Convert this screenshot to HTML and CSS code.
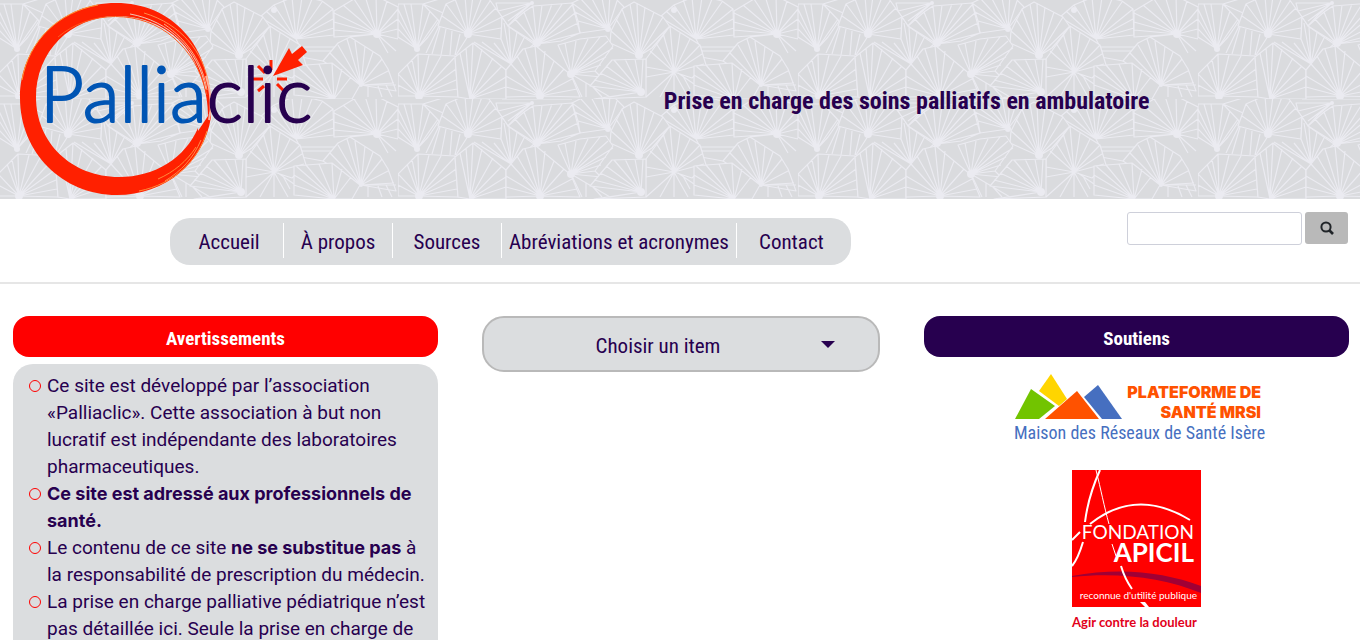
FILE: index.html
```html
<!DOCTYPE html>
<html lang="fr">
<head>
  <meta charset="UTF-8">
  <meta name="viewport" content="width=device-width, initial-scale=1">
  <title>Palliaclic</title>
  <link rel="stylesheet" href="styles.css">
</head>
<body>
  <header class="banner">
    <svg class="banner-pattern" aria-hidden="true">
      <defs>
        <pattern id="fans" x="-2" y="-1" width="400" height="100" patternUnits="userSpaceOnUse">
          <rect width="400" height="100" fill="#dadbde"/>
          <g fill="#dadbde" stroke="#ebebf1" stroke-width="1.2" stroke-linejoin="round">
            <path d="M134 4L98 4 100 12 104 18 110 27 120 16zM134 4L100 12M134 4L104 18M134 4L110 22M104 0H174"/>
            <path d="M210 30L182 34 180 22 174 4 190 -4 210 -8 226 8zM210 30L180 22M210 30L177 13M210 30L174 4M210 30L183 0M210 30L192 -4M210 30L203 -6M210 30L212 -6M210 30L219 2"/>
            <path d="M298 40L262 18 276 6 300 -4 324 2 335 10 336 36zM298 40L268 12M298 40L276 6M298 40L285 0M298 40L294 -2M298 40L304 -2M298 40L314 0M298 40L324 3M298 40L335 10M298 40L335 20M298 40L336 29M298 40L304 52 306 66M300 48H340M303 58L325 62M304 52L336 52"/>
            <path d="M379 35L336 38 336 12 356 0 376 -4 400 8 400 40zM379 35L336 31M379 35L336 23M379 35L336 14M379 35L345 6M379 35L356 0M379 35L367 -3M379 35L378 -3M379 35L389 2M379 35L400 10M379 35L400 20M379 35L400 30M379 35L398 52M379 35L390 54M379 35L352 38"/>
            <path d="M19 50L0 38 0 5 25 5 41 22 30 38zM19 50L0 30M19 50L0 20M19 50L0 10M19 50L6 5M19 50L13 5M19 50L25 5M19 50L32 12M19 50L40 20M25 5L48 -2M25 5L45 14"/>
            <path d="M70 35L40 27 48 5 68 -4 91 0 104 18 103 40zM70 35L44 17M70 35L48 5M70 35L57 0M70 35L67 -3M70 35L75 -3M70 35L84 -2M70 35L92 2M70 35L98 9M70 35L104 18M70 35L103 29M41 27L28 54M42 28L34 55M48 30L43 56M54 32L52 56M62 35L57 56M70 37L58 56"/>
            <path d="M113 65L103 40 104 18 110 27 136 45zM113 65L106 24M113 65L111 28M113 65L119 33M113 65L126 39M113 65L76 43M113 65L84 43M113 65L96 44"/>
            <path d="M139 45L110 27 126 13 135 7 174 4 182 34 163 42zM139 45L117 20M139 45L126 13M139 45L135 7M139 45L144 6M139 45L154 5M139 45L164 5M139 45L174 6M139 45L177 14M139 45L180 24M139 45L182 34"/>
            <path d="M241 57L212 44 213 32 224 10 236 3 265 18 272 28 254 49zM241 57L213 32M241 57L218 20M241 57L224 10M241 57L232 5M241 57L239 4M241 57L247 8M241 57L256 13M241 57L265 18M241 57L272 27"/>
            <path d="M173 75L160 46 182 40 208 37 215 47 197 72 203 78zM173 75L167 44M173 75L178 42M173 75L190 40M173 75L202 38M173 75L210 42M173 75L215 49M173 75L208 58M173 75L203 66M173 75L197 72M173 75L195 88 212 98M173 75L184 98M188 84V98M195 88L204 98"/>
            <path d="M276 73L248 78 248 60 272 27 302 46 308 66 294 79zM276 73L248 68M276 73L252 52M276 73L258 44M276 73L265 34M276 73L272 27M276 73L282 34M276 73L292 40M276 73L302 46M276 73L304 55M276 73L306 65M276 73L248 98M276 73V98M276 73L262 98M276 73L290 98M280 74L296 85M285 77L292 90"/>
            <path d="M363 86L325 62 340 44 352 38 382 57 390 70 398 92zM363 86L332 54M363 86L340 46M363 86L349 40M363 86L357 42M363 86L367 47M363 86L375 53M363 86L384 60M363 86L390 72M363 86L396 84M363 86H398M370 87V98M380 87L384 98M388 86L394 98"/>
            <path d="M21 97L0 97 0 75 20 55 57 57 60 98zM21 97L0 86M21 97L0 75M21 97L9 65M21 97L14 60M21 97L20 55M21 97L31 56M21 97L43 57M21 97L56 59M21 97L58 70M21 97L58 81M21 97L59 90"/>
            <path d="M72 100L60 98 57 58 75 44 108 71 108 100zM72 100L62 54M72 100L68 49M72 100L75 44M72 100L84 50M72 100L95 59M72 100L104 67M72 100L108 78M72 100L108 88"/>
            <path d="M142 97L108 98 108 71 125 50 138 47 173 76 182 98zM142 97L108 88M142 97L108 77M142 97L113 65M142 97L119 57M142 97L127 50M142 97L137 47M142 97L147 52M142 97L156 62M142 97L166 70M142 97L174 80M142 97L179 90"/>
            <path d="M243 93L192 87 214 61 248 60 248 98 196 100zM243 93L196 81M243 93L202 74M243 93L208 67M243 93L216 61M243 93L227 60M243 93L237 60M243 93L245 60M243 93L212 98"/>
            <path d="M336 100L296 96 296 67 334 64 362 86 354 100zM336 100L296 86M336 100L296 76M336 100L298 67M336 100L308 66M336 100L321 65M336 100L334 64M336 100L344 70M336 100L353 78"/>
          </g>
          <g fill="#ebebf1">
            <circle cx="134" cy="4" r="2"/>
            <circle cx="210" cy="30" r="3"/>
            <circle cx="276" cy="11" r="3"/>
            <circle cx="379" cy="35" r="4"/>
            <circle cx="19" cy="50" r="3"/>
            <circle cx="70" cy="35" r="4"/>
            <circle cx="139" cy="44" r="4"/>
            <circle cx="241" cy="56" r="4"/>
            <circle cx="173" cy="75" r="4"/>
            <circle cx="21" cy="97" r="4"/>
            <circle cx="142" cy="97" r="4"/>
            <circle cx="243" cy="93" r="4"/>
            <circle cx="363" cy="86" r="2"/>
          </g>
        </pattern>
      </defs>
      <rect width="100%" height="100%" fill="url(#fans)"/>
    </svg>
    <a class="logo" href="#" aria-label="Palliaclic">
      <svg width="320" height="199" viewBox="0 0 320 199">
        <!-- brush ring -->
        <path fill="#ff2000" fill-rule="evenodd" d="M116 3C62 3 20 44 20 98s42 97 97 97c48 0 87-32 94-78l-1-4-12 18v-3c-13 30-43 49-79 49-47 0-83-34-83-80 0-45 34-80 80-81 40 0 72 22 84 58 6 16 8 30 8 42l2-4C213 45 171 3 116 3z"/>
        <g fill="none" stroke="#ff5a1e">
          <path d="M58 37C90 10 141 9 174 38c16 14 27 32 33 57"/>
          <path d="M130 14c39 7 68 35 76 75" stroke="#f3c4b4"/>
          <path d="M144 13c37 11 60 39 65 73" stroke="#ff8a4a"/>
          <path d="M164 24c24 16 39 40 43 66" stroke="#ffab82"/>
          <path d="M206 76c5 16 6 32 3 44" stroke="#ffb29a" stroke-width="2"/>
          <path d="M139 191c35-7 59-30 68-60M158 179c16-7 29-18 38-32" stroke="#ff8a38"/>
          <path d="M165 181c16-10 28-22 36-41" stroke="#ff8a4a"/>
          <path d="M22 80C29 40 59 12 98 5" stroke="#ff9c35"/>
        </g>
        <!-- click rays and pointer -->
        <path fill="none" stroke="#ff2000" stroke-width="3" d="M271 60v10M258 66l7 7M253 79h10M258 91l6-5M277 79h10M277 84l7 7"/>
        <path fill="#ff2000" d="M273 76l16-28 3 6 10-8 5 6-9 8 5 5z"/>
        <text class="wordmark" x="40" y="122"><tspan class="blue">Pallia</tspan><tspan class="purple">clic</tspan></text>
      </svg>
    </a>
    <h1>Prise en charge des soins palliatifs en ambulatoire</h1>
  </header>

  <div class="toolbar">
    <nav>
      <ul class="menu">
        <li><a href="#">Accueil</a></li>
        <li><a href="#">À propos</a></li>
        <li><a href="#">Sources</a></li>
        <li><a href="#">Abréviations et acronymes</a></li>
        <li><a href="#">Contact</a></li>
      </ul>
    </nav>
    <form class="search">
      <input type="text" aria-label="Rechercher">
      <button type="submit" aria-label="Lancer la recherche">
        <svg width="14" height="14" viewBox="0 0 14 14" fill="none" stroke="#212529">
          <circle cx="6" cy="6" r="4.6" stroke-width="2"/>
          <path d="M9 9l4 4" stroke-width="2.6"/>
        </svg>
      </button>
    </form>
  </div>

  <main class="columns">
    <section>
      <h2 class="title title-red">Avertissements</h2>
      <ul class="warnings">
        <li>Ce site est développé par l’association «Palliaclic». Cette association à but non lucratif est indépendante des laboratoires pharmaceutiques.</li>
        <li><b>Ce site est adressé aux professionnels de santé.</b></li>
        <li>Le contenu de ce site <b>ne se substitue pas</b> à la responsabilité de prescription du médecin.</li>
        <li>La prise en charge palliative pédiatrique n’est pas détaillée ici. Seule la prise en charge de</li>
      </ul>
    </section>

    <section>
      <div class="picker">
        <select aria-label="Choisir un item">
          <option>Choisir un item</option>
        </select>
      </div>
    </section>

    <section>
      <h2 class="title title-purple">Soutiens</h2>
      <div class="sponsors">
        <a href="#" aria-label="Plateforme de santé MRSI">
          <svg width="248" height="72" viewBox="-2 0 248 72">
            <path fill="#ffd500" d="M36 1l16 25-8 7-20-15z"/>
            <path fill="#72c400" d="M0 46l16-30 24 17-16 13z"/>
            <path fill="#ff5200" d="M30 46l32-28 22 28z"/>
            <path fill="#466fc0" d="M69 24l14-12 24 34H87z"/>
            <text class="mrsi-name" x="246" y="25" text-anchor="end">PLATEFORME DE</text>
            <text class="mrsi-name" x="246" y="45" text-anchor="end">SANTÉ MRSI</text>
            <text class="mrsi-sub" x="-1" y="66">Maison des Réseaux de Santé Isère</text>
          </svg>
        </a>
        <a href="#" aria-label="Fondation Apicil">
          <svg width="130" height="162" viewBox="0 0 130 162">
            <path fill="#ff0000" d="M0 0h129v137H0z"/>
            <path fill="#a00035" d="M0 106c48-9 92-4 129 10v7C92 108 48 102 0 107z"/>
            <g fill="none" stroke="#fff">
              <path d="M28 0C19 20 15 36 13 52M11 72C8 82 5 90 0 96" stroke-width="2"/>
              <path d="M24 0c5 20 8 36 13 54M40 74l4 12" stroke-width="1"/>
              <path d="M0 70l8-8M18 54C48 30 82 28 118 50" stroke-width="2"/>
              <path d="M49 96c3 10 6 16 11 23" stroke-width="2"/>
            </g>
            <path fill="#fff" d="M68 132h5l4 5h-4z"/>
            <text class="apicil-name" x="122" y="69" text-anchor="end">FONDATION</text>
            <text class="apicil-name apicil-bold" x="122" y="92" text-anchor="end">APICIL</text>
            <text class="apicil-note" x="125" y="129" text-anchor="end">reconnue d'utilité publique</text>
            <text class="apicil-motto" x="0" y="157">Agir contre la douleur</text>
          </svg>
        </a>
      </div>
    </section>
  </main>
</body>
</html>
```
FILE: styles.css
```css
* {
  box-sizing: border-box;
}

body {
  margin: 0;
  background: #fff;
  color: #27004f;
  font-family: Roboto, "Liberation Sans", sans-serif;
  font-size: 19px;
  line-height: 27px;
}

h1, h2, .menu, .picker select {
  font-family: "Liberation Sans Narrow", "Roboto Condensed", "Liberation Sans", sans-serif;
}

a {
  color: inherit;
  text-decoration: none;
}

.banner {
  position: relative;
  display: grid;
  grid-template-columns: 1fr 2fr;
  align-items: center;
  background: #dadbde;
}

.banner-pattern {
  position: absolute;
  width: 100%;
  height: 100%;
}

.banner h1 {
  position: relative;
  margin: 0;
  padding-top: 4px;
  text-align: center;
  font-size: 24px;
}

.logo {
  position: relative;
}

.logo svg, .sponsors svg {
  display: block;
  overflow: visible;
}

.wordmark {
  font-family: Lato, sans-serif;
  font-size: 76px;
  font-weight: 300;
  stroke-width: 2px;
  stroke-linejoin: round;
}

.blue {
  fill: #0055b4;
  stroke: #0055b4;
}

.purple {
  fill: #27004f;
  stroke: #27004f;
}

.toolbar {
  display: flex;
  justify-content: space-between;
  align-items: flex-start;
  padding: 13px 12px 17px 12.5%;
  border-bottom: 2px solid #e6e6e6;
}

.menu {
  display: flex;
  margin: 6px 0 0;
  padding: 5px 5px 7px;
  list-style: none;
  background: #dbdddf;
  border-radius: 20px;
  font-size: 21px;
}

.menu li {
  min-width: 109px;
  padding: 4px 7px 0;
  text-align: center;
  line-height: 31px;
  border-right: 1px solid #fff;
}

.menu li:last-child {
  border-right: 0;
}

.search {
  display: flex;
  gap: 3px;
}

.search input {
  width: 175px;
  height: 33px;
  border: 1px solid #ced0da;
  border-radius: 3px;
}

.search button {
  display: grid;
  place-items: center;
  width: 43px;
  height: 32px;
  padding: 0;
  border: 0;
  border-radius: 3px;
  background: #b9b9b9;
}

.columns {
  display: grid;
  grid-template-columns: 16fr 15fr 16fr;
  gap: 44px;
  padding: 32px 11px 0 13px;
}

.title {
  margin: 0 0 7px;
  padding: 9px 0 5px;
  border-radius: 16px;
  color: #fff;
  text-align: center;
  font-size: 19px;
  line-height: 27px;
}

.title-red {
  background: #ff0000;
}

.title-purple {
  background: #27004f;
}

.warnings {
  margin: 0;
  padding: 8px 8px 32px 34px;
  list-style: none;
  background: #dbdddf;
  border-radius: 20px;
}

.warnings b {
  font-family: Inter, sans-serif;
  font-size: 18px;
  line-height: 1;
}

.warnings li::before {
  content: "";
  display: inline-block;
  width: 10px;
  height: 10px;
  margin: 0 6px 0 -18px;
  border: 1px solid #ff0000;
  border-radius: 50%;
}

.picker {
  position: relative;
}

.picker select {
  width: 100%;
  height: 56px;
  padding: 4px 46px 0 0;
  appearance: none;
  border: 2px solid #b9b9b9;
  border-radius: 22px;
  background: #dbdddf;
  color: #27004f;
  font-size: 21px;
  text-align: center;
  text-align-last: center;
}

.picker::after {
  content: "";
  position: absolute;
  top: 25px;
  right: 45px;
  border: 7px solid transparent;
  border-top-color: #27004f;
  border-bottom: 0;
}

.sponsors {
  display: flex;
  flex-direction: column;
  align-items: center;
  gap: 25px;
  padding-top: 9px;
}

.mrsi-name {
  fill: #ff5200;
  font: 900 16px Inter, sans-serif;
}

.mrsi-sub {
  fill: #466fc0;
  font: 18px "Liberation Sans Narrow", "Roboto Condensed", sans-serif;
}

.apicil-name {
  fill: #fff;
  font: 19px Lato, sans-serif;
}

.apicil-bold {
  font-size: 26px;
  font-weight: 700;
}

.apicil-note {
  fill: #fff;
  font: 10px Lato, sans-serif;
}

.apicil-motto {
  fill: #e2001a;
  font: 700 13px Lato, sans-serif;
}
```
